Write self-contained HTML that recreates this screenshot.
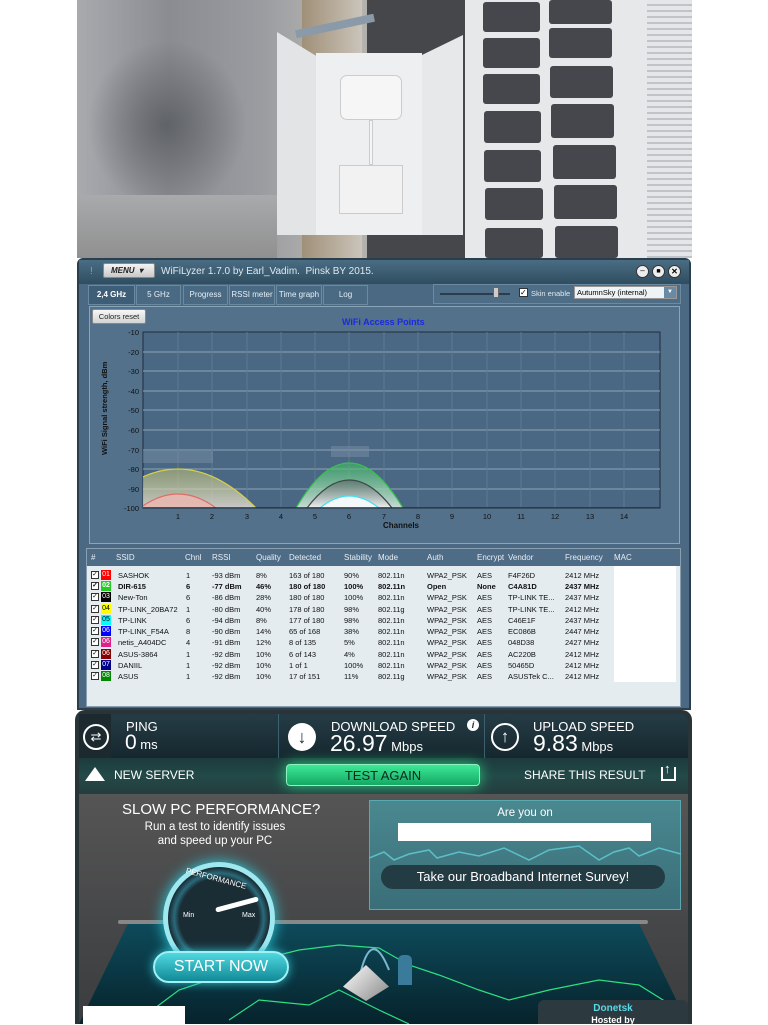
<!DOCTYPE html>
<html><head><meta charset="utf-8"><style>
*{margin:0;padding:0;box-sizing:border-box}
body{width:768px;height:1024px;background:#fff;position:relative;overflow:hidden;font-family:"Liberation Sans",sans-serif}
.a{position:absolute}
.cell{position:absolute;background:#45474c;border-radius:3px}
.tab{position:absolute;top:285px;height:20px;background:#4a6a84;border:1px solid #6a8aa2;color:#e6eef4;font-size:8px;text-align:center;line-height:18px}
.th{position:absolute;top:553px;font-size:8px;color:#e8eef4}
.row{position:absolute;left:88px;width:526px;height:11px;font-size:7.5px;color:#111}
.row span{position:absolute;top:1px;white-space:nowrap}
.chk{position:absolute;left:3px;top:1px;width:8px;height:8px;background:#fff;border:1px solid #333;font-size:7px;line-height:6px;text-align:center}
.sw{position:absolute;left:13px;top:0;width:10px;height:10px;font-size:7px;color:#fff;line-height:10px;text-align:center}
.st{color:#fff}
</style></head><body>

<!-- PHOTO -->
<div class="a" style="left:77px;top:0;width:615px;height:258px;background:linear-gradient(90deg,#a8aaae 0%,#8a8c92 15%,#9a9ca0 30%,#bcbab6 45%,#5a5c60 65%,#d8dadc 80%,#cfd2d4 100%);overflow:hidden">
 <div class="a" style="left:10px;top:40px;width:160px;height:170px;background:radial-gradient(ellipse at center,#606368 0%,rgba(140,142,146,0) 70%)"></div>
 <div class="a" style="left:0;top:195px;width:200px;height:63px;background:linear-gradient(180deg,#a8aaac,#909090)"></div>
 <div class="a" style="left:225px;top:0;width:60px;height:258px;background:linear-gradient(90deg,#a09078,#cac4ba)"></div>
 <div class="a" style="left:290px;top:0;width:100px;height:258px;background:#45474b"></div>
 <div class="a" style="left:388px;top:0;width:182px;height:258px;background:#e6e8ea"></div>
 <div class="a" style="left:570px;top:0;width:45px;height:258px;background:repeating-linear-gradient(180deg,#e4e6e8 0 4px,#c0c4c8 4px 6px)"></div>
</div>
<div class="cell" style="left:483px;top:2px;width:57px;height:30px"></div><div class="cell" style="left:549px;top:0;width:63px;height:24px"></div>
<div class="cell" style="left:483px;top:38px;width:57px;height:30px"></div><div class="cell" style="left:549px;top:28px;width:63px;height:30px"></div>
<div class="cell" style="left:483px;top:74px;width:57px;height:30px"></div><div class="cell" style="left:550px;top:66px;width:63px;height:32px"></div>
<div class="cell" style="left:484px;top:111px;width:57px;height:32px"></div><div class="cell" style="left:551px;top:104px;width:63px;height:34px"></div>
<div class="cell" style="left:484px;top:150px;width:57px;height:32px"></div><div class="cell" style="left:553px;top:145px;width:63px;height:34px"></div>
<div class="cell" style="left:485px;top:188px;width:58px;height:32px"></div><div class="cell" style="left:554px;top:185px;width:63px;height:34px"></div>
<div class="cell" style="left:485px;top:228px;width:58px;height:30px"></div><div class="cell" style="left:555px;top:226px;width:63px;height:32px"></div>
<div class="a" style="left:295px;top:22px;width:80px;height:8px;background:#8a9aa8;transform:rotate(-12deg)"></div>
<div class="a" style="left:277px;top:32px;width:40px;height:203px;background:#e2e4e6;clip-path:polygon(0 0,100% 12%,100% 100%,0 100%)"></div>
<div class="a" style="left:316px;top:53px;width:106px;height:182px;background:#eeeff0"></div>
<div class="a" style="left:422px;top:35px;width:41px;height:200px;background:#e6e8ea;clip-path:polygon(0 10%,100% 0,100% 100%,0 100%)"></div>
<div class="a" style="left:340px;top:75px;width:62px;height:45px;background:#f6f6f6;border:1px solid #ccc;border-radius:7px"></div>
<div class="a" style="left:369px;top:120px;width:4px;height:45px;background:#f6f6f6;border:1px solid #ccc"></div>
<div class="a" style="left:339px;top:165px;width:64px;height:49px;background:#f2f2f2;border:1px solid #ccc"></div>

<!-- WIFILYZER -->
<div class="a" style="left:77px;top:258px;width:614px;height:452px;background:#4b6982;border:2px solid #2b3e4e;border-radius:6px 6px 0 0"></div>
<div class="a" style="left:79px;top:260px;width:610px;height:24px;background:linear-gradient(180deg,#4a6d84,#2f4d60)"></div>
<div class="a" style="left:90px;top:266px;color:#3cc0e0;font-size:10px">!</div>
<div class="a" style="left:103px;top:263px;width:52px;height:15px;background:linear-gradient(#f4f4f4,#c8c8c8);border:1px solid #888;border-radius:2px;font-size:8px;font-weight:bold;font-style:italic;line-height:13px;padding-left:7px;color:#222">MENU&nbsp;&nbsp;▾</div>
<div class="a" style="left:161px;top:266px;color:#e0e8ee;font-size:10px">WiFiLyzer 1.7.0 by Earl_Vadim.&nbsp; Pinsk BY 2015.</div>
<div class="a" style="left:636px;top:265px;width:13px;height:13px;border-radius:50%;background:#eee;border:1px solid #333;font-size:8px;text-align:center;line-height:10px">–</div>
<div class="a" style="left:652px;top:265px;width:13px;height:13px;border-radius:50%;background:#eee;border:1px solid #333;font-size:7px;text-align:center;line-height:11px">■</div>
<div class="a" style="left:668px;top:265px;width:13px;height:13px;border-radius:50%;background:#eee;border:1px solid #333;font-size:8px;font-weight:bold;text-align:center;line-height:11px">✕</div>
<div class="tab" style="left:88px;width:47px;background:#3e5d76;font-weight:bold;color:#fff">2,4 GHz</div>
<div class="tab" style="left:136px;width:45px">5 GHz</div>
<div class="tab" style="left:183px;width:45px">Progress</div>
<div class="tab" style="left:229px;width:46px">RSSI meter</div>
<div class="tab" style="left:276px;width:46px">Time graph</div>
<div class="tab" style="left:323px;width:45px">Log</div>
<div class="a" style="left:433px;top:284px;width:248px;height:20px;background:#4e6e88;border:1px solid #6c8aa0"></div>
<div class="a" style="left:440px;top:293px;width:70px;height:2px;background:#2b3d4c"></div>
<div class="a" style="left:493px;top:287px;width:6px;height:11px;background:#ccc;border:1px solid #666"></div>
<div class="a" style="left:519px;top:288px;width:9px;height:9px;background:#fff;border:1px solid #333;font-size:8px;line-height:7px">✓</div>
<div class="a" style="left:531px;top:289px;font-size:7.5px;color:#e0e8ee">Skin enable</div>
<div class="a" style="left:574px;top:286px;width:103px;height:13px;background:#eef3f6;border:1px solid #999;font-size:7.5px;line-height:11px;padding-left:2px">AutumnSky (internal)</div>
<div class="a" style="left:664px;top:287px;width:12px;height:11px;background:#6a8aa4;color:#fff;font-size:6px;text-align:center;line-height:11px">▼</div>

<div class="a" style="left:89px;top:306px;width:591px;height:238px;background:#53718b;border:1px solid #8aa4b8"></div>
<div class="a" style="left:92px;top:309px;width:54px;height:15px;background:linear-gradient(#f6f6f6,#d4d4d4);border:1px solid #888;border-radius:2px;font-size:7.5px;text-align:center;line-height:13px;color:#222">Colors reset</div>
<div class="a" style="left:342px;top:317px;font-size:9px;font-weight:bold;color:#1a2ae0">WiFi Access Points</div>
<div class="a" style="left:100px;font-size:7.5px;font-weight:bold;color:#111;transform:rotate(-90deg);transform-origin:0 0;top:455px;white-space:nowrap">WiFi Signal strength, dBm</div>
<div class="a" style="left:383px;top:521px;font-size:8px;font-weight:bold;color:#111">Channels</div>
<svg class="a" style="left:0;top:0" width="768" height="1024">
<defs><clipPath id="pc"><rect x="143" y="332" width="517" height="176"/></clipPath>
<linearGradient id="gy" x1="0" y1="0" x2="0" y2="1"><stop offset="0" stop-color="#c8c870" stop-opacity=".5"/><stop offset="1" stop-color="#e8e0d8" stop-opacity=".8"/></linearGradient>
<linearGradient id="gg" x1="0" y1="0" x2="0" y2="1"><stop offset="0" stop-color="#3cb860" stop-opacity=".6"/><stop offset="1" stop-color="#d8e8e0" stop-opacity=".9"/></linearGradient>
<linearGradient id="gk" x1="0" y1="0" x2="0" y2="1"><stop offset="0" stop-color="#506060" stop-opacity=".6"/><stop offset="1" stop-color="#f0f0f0" stop-opacity="1"/></linearGradient></defs>
<rect x="143" y="332" width="517" height="176" fill="#4a6784" stroke="#1f2c38"/>
<g stroke="#8fa4b6" stroke-width="1">
<line x1="143" y1="352" x2="660" y2="352"/><line x1="143" y1="371" x2="660" y2="371"/><line x1="143" y1="391" x2="660" y2="391"/><line x1="143" y1="410" x2="660" y2="410"/><line x1="143" y1="430" x2="660" y2="430"/><line x1="143" y1="450" x2="660" y2="450"/><line x1="143" y1="469" x2="660" y2="469"/><line x1="143" y1="489" x2="660" y2="489"/>
</g>
<g stroke="#5f7b94" stroke-width="1">
<line x1="178" y1="332" x2="178" y2="508"/><line x1="212" y1="332" x2="212" y2="508"/><line x1="247" y1="332" x2="247" y2="508"/><line x1="281" y1="332" x2="281" y2="508"/><line x1="315" y1="332" x2="315" y2="508"/><line x1="349" y1="332" x2="349" y2="508"/><line x1="384" y1="332" x2="384" y2="508"/><line x1="418" y1="332" x2="418" y2="508"/><line x1="452" y1="332" x2="452" y2="508"/><line x1="487" y1="332" x2="487" y2="508"/><line x1="521" y1="332" x2="521" y2="508"/><line x1="555" y1="332" x2="555" y2="508"/><line x1="590" y1="332" x2="590" y2="508"/><line x1="624" y1="332" x2="624" y2="508"/>
</g>
<g clip-path="url(#pc)">
<rect x="143" y="451" width="70" height="12" fill="#7a90a4" opacity=".5"/>
<rect x="331" y="446" width="38" height="11" fill="#7a90a4" opacity=".5"/>
<path d="M100 508 Q178 430 256 508Z" fill="url(#gy)" stroke="#d8d048" stroke-width="1.2"/>
<path d="M140 508 Q178 480 216 508Z" fill="#e8b8b0" stroke="#e06860" stroke-width="1.2" opacity=".9"/>
<path d="M296 508 Q349 418 403 508Z" fill="url(#gg)" stroke="#38c050" stroke-width="1.2"/>
<path d="M307 508 Q349 452 392 508Z" fill="url(#gk)" stroke="#404848" stroke-width="1.2"/>
<path d="M320 508 Q349 484 379 508Z" fill="#f4f8f8" stroke="#40e0f0" stroke-width="1.2"/>
<line x1="143" y1="508" x2="660" y2="508" stroke="#2a2a2a" stroke-width="1.5"/>
</g>
<g font-family="Liberation Sans" font-size="7.5" fill="#111" text-anchor="end">
<text x="139" y="335">-10</text><text x="139" y="355">-20</text><text x="139" y="374">-30</text><text x="139" y="394">-40</text><text x="139" y="413">-50</text><text x="139" y="433">-60</text><text x="139" y="453">-70</text><text x="139" y="472">-80</text><text x="139" y="492">-90</text><text x="139" y="511">-100</text>
</g>
<g font-family="Liberation Sans" font-size="7.5" fill="#111" text-anchor="middle">
<text x="178" y="519">1</text><text x="212" y="519">2</text><text x="247" y="519">3</text><text x="281" y="519">4</text><text x="315" y="519">5</text><text x="349" y="519">6</text><text x="384" y="519">7</text><text x="418" y="519">8</text><text x="452" y="519">9</text><text x="487" y="519">10</text><text x="521" y="519">11</text><text x="555" y="519">12</text><text x="590" y="519">13</text><text x="624" y="519">14</text>
</g>
</svg>

<div class="a" style="left:86px;top:548px;width:595px;height:159px;background:#e4ecf0;border:1px solid #8aa0b0"></div>
<div class="a" style="left:87px;top:549px;width:593px;height:17px;background:#4e6c86"></div>
<div class="th" style="left:91px">#</div><div class="th" style="left:116px">SSID</div><div class="th" style="left:185px">Chnl</div><div class="th" style="left:212px">RSSI</div><div class="th" style="left:256px">Quality</div><div class="th" style="left:289px">Detected</div><div class="th" style="left:344px">Stability</div><div class="th" style="left:378px">Mode</div><div class="th" style="left:427px">Auth</div><div class="th" style="left:477px">Encrypt</div><div class="th" style="left:508px">Vendor</div><div class="th" style="left:565px">Frequency</div><div class="th" style="left:614px">MAC</div>
<div class="a" style="left:614px;top:566px;width:62px;height:116px;background:#fff"></div>

<div class="row" style="top:570px"><div class="chk">✓</div><div class="sw" style="background:#f00">01</div><span style="left:30px">SASHOK</span><span style="left:98px">1</span><span style="left:124px">-93 dBm</span><span style="left:168px">8%</span><span style="left:201px">163 of 180</span><span style="left:256px">90%</span><span style="left:290px">802.11n</span><span style="left:339px">WPA2_PSK</span><span style="left:389px">AES</span><span style="left:420px">F4F26D</span><span style="left:477px">2412 MHz</span></div>
<div class="row" style="top:581px;font-weight:bold"><div class="chk">✓</div><div class="sw" style="background:#2c2">02</div><span style="left:30px">DIR-615</span><span style="left:98px">6</span><span style="left:124px">-77 dBm</span><span style="left:168px">46%</span><span style="left:201px">180 of 180</span><span style="left:256px">100%</span><span style="left:290px">802.11n</span><span style="left:339px">Open</span><span style="left:389px">None</span><span style="left:420px">C4A81D</span><span style="left:477px">2437 MHz</span></div>
<div class="row" style="top:592px"><div class="chk">✓</div><div class="sw" style="background:#000">03</div><span style="left:30px">New-Ton</span><span style="left:98px">6</span><span style="left:124px">-86 dBm</span><span style="left:168px">28%</span><span style="left:201px">180 of 180</span><span style="left:256px">100%</span><span style="left:290px">802.11n</span><span style="left:339px">WPA2_PSK</span><span style="left:389px">AES</span><span style="left:420px">TP-LINK TE...</span><span style="left:477px">2437 MHz</span></div>
<div class="row" style="top:604px"><div class="chk">✓</div><div class="sw" style="background:#ff0;color:#000">04</div><span style="left:30px">TP-LINK_20BA72</span><span style="left:98px">1</span><span style="left:124px">-80 dBm</span><span style="left:168px">40%</span><span style="left:201px">178 of 180</span><span style="left:256px">98%</span><span style="left:290px">802.11g</span><span style="left:339px">WPA2_PSK</span><span style="left:389px">AES</span><span style="left:420px">TP-LINK TE...</span><span style="left:477px">2412 MHz</span></div>
<div class="row" style="top:615px"><div class="chk">✓</div><div class="sw" style="background:#0ff;color:#000">05</div><span style="left:30px">TP-LINK</span><span style="left:98px">6</span><span style="left:124px">-94 dBm</span><span style="left:168px">8%</span><span style="left:201px">177 of 180</span><span style="left:256px">98%</span><span style="left:290px">802.11n</span><span style="left:339px">WPA2_PSK</span><span style="left:389px">AES</span><span style="left:420px">C46E1F</span><span style="left:477px">2437 MHz</span></div>
<div class="row" style="top:626px"><div class="chk">✓</div><div class="sw" style="background:#00f">06</div><span style="left:30px">TP-LINK_F54A</span><span style="left:98px">8</span><span style="left:124px">-90 dBm</span><span style="left:168px">14%</span><span style="left:201px">65 of 168</span><span style="left:256px">38%</span><span style="left:290px">802.11n</span><span style="left:339px">WPA2_PSK</span><span style="left:389px">AES</span><span style="left:420px">EC086B</span><span style="left:477px">2447 MHz</span></div>
<div class="row" style="top:637px"><div class="chk">✓</div><div class="sw" style="background:#e0208a">06</div><span style="left:30px">netis_A404DC</span><span style="left:98px">4</span><span style="left:124px">-91 dBm</span><span style="left:168px">12%</span><span style="left:201px">8 of 135</span><span style="left:256px">5%</span><span style="left:290px">802.11n</span><span style="left:339px">WPA2_PSK</span><span style="left:389px">AES</span><span style="left:420px">048D38</span><span style="left:477px">2427 MHz</span></div>
<div class="row" style="top:649px"><div class="chk">✓</div><div class="sw" style="background:#800">06</div><span style="left:30px">ASUS-3864</span><span style="left:98px">1</span><span style="left:124px">-92 dBm</span><span style="left:168px">10%</span><span style="left:201px">6 of 143</span><span style="left:256px">4%</span><span style="left:290px">802.11n</span><span style="left:339px">WPA2_PSK</span><span style="left:389px">AES</span><span style="left:420px">AC220B</span><span style="left:477px">2412 MHz</span></div>
<div class="row" style="top:660px"><div class="chk">✓</div><div class="sw" style="background:#008">07</div><span style="left:30px">DANIIL</span><span style="left:98px">1</span><span style="left:124px">-92 dBm</span><span style="left:168px">10%</span><span style="left:201px">1 of 1</span><span style="left:256px">100%</span><span style="left:290px">802.11n</span><span style="left:339px">WPA2_PSK</span><span style="left:389px">AES</span><span style="left:420px">50465D</span><span style="left:477px">2412 MHz</span></div>
<div class="row" style="top:671px"><div class="chk">✓</div><div class="sw" style="background:#080">08</div><span style="left:30px">ASUS</span><span style="left:98px">1</span><span style="left:124px">-92 dBm</span><span style="left:168px">10%</span><span style="left:201px">17 of 151</span><span style="left:256px">11%</span><span style="left:290px">802.11g</span><span style="left:339px">WPA2_PSK</span><span style="left:389px">AES</span><span style="left:420px">ASUSTek C...</span><span style="left:477px">2412 MHz</span></div>

<!-- SPEEDTEST -->
<div class="a" style="left:75px;top:710px;width:617px;height:314px;background:#2a3438;border-radius:10px 10px 0 0"></div>
<div class="a" style="left:79px;top:714px;width:609px;height:44px;background:linear-gradient(#253c46,#16272e);border-radius:8px 8px 0 0"></div>
<div class="a" style="left:79px;top:714px;width:32px;height:44px;background:#1c2a30"></div>
<div class="a" style="left:278px;top:714px;width:1px;height:44px;background:#3c6070"></div>
<div class="a" style="left:484px;top:714px;width:1px;height:44px;background:#3c6070"></div>
<div class="a" style="left:83px;top:724px;width:26px;height:26px;border:2px solid #fff;border-radius:50%;color:#fff;font-size:13px;text-align:center;line-height:22px">⇄</div>
<div class="a st" style="left:126px;top:719px;font-size:13px">PING</div>
<div class="a st" style="left:125px;top:731px;font-size:21px">0<span style="font-size:13px"> ms</span></div>
<div class="a" style="left:288px;top:723px;width:28px;height:28px;background:#fff;border-radius:50%;color:#1a2a30;font-size:18px;font-weight:bold;text-align:center;line-height:28px">↓</div>
<div class="a st" style="left:331px;top:719px;font-size:13px">DOWNLOAD SPEED</div>
<div class="a" style="left:467px;top:719px;width:12px;height:12px;background:#fff;border-radius:50%;font-size:9px;font-weight:bold;font-style:italic;text-align:center;line-height:12px;color:#1a2a30">i</div>
<div class="a st" style="left:330px;top:730px;font-size:23px">26.97<span style="font-size:13px"> Mbps</span></div>
<div class="a" style="left:491px;top:723px;width:28px;height:28px;border:2px solid #fff;border-radius:50%;color:#fff;font-size:17px;font-weight:bold;text-align:center;line-height:24px">↑</div>
<div class="a st" style="left:533px;top:719px;font-size:13px">UPLOAD SPEED</div>
<div class="a st" style="left:533px;top:730px;font-size:23px">9.83<span style="font-size:13px"> Mbps</span></div>

<div class="a" style="left:79px;top:758px;width:609px;height:36px;background:linear-gradient(#1d3a3c,#224a48 50%,#263c3e)"></div>
<div class="a" style="left:85px;top:767px;width:0;height:0;border-left:10px solid transparent;border-right:10px solid transparent;border-bottom:14px solid #fff"></div>
<div class="a st" style="left:114px;top:768px;font-size:12px">NEW SERVER</div>
<div class="a" style="left:286px;top:764px;width:194px;height:22px;background:linear-gradient(#3ee898,#14a864);border:1px solid #8ff0c0;border-radius:4px;box-shadow:0 0 14px #2ad080;color:#0c2a1c;font-size:13px;text-align:center;line-height:21px">TEST AGAIN</div>
<div class="a st" style="left:524px;top:768px;font-size:12px">SHARE THIS RESULT</div>
<div class="a" style="left:661px;top:767px;width:15px;height:14px;border:2px solid #fff;border-top:none"></div>
<div class="a st" style="left:664px;top:761px;font-size:13px;font-weight:bold">↑</div>

<div class="a" style="left:79px;top:794px;width:609px;height:230px;background:linear-gradient(#555,#3a3c3e)"></div>
<div class="a st" style="left:122px;top:801px;font-size:15px">SLOW PC PERFORMANCE?</div>
<div class="a st" style="left:120px;top:820px;width:190px;text-align:center;font-size:11.5px;line-height:14px">Run a test to identify issues<br>and speed up your PC</div>
<div class="a" style="left:369px;top:800px;width:312px;height:110px;background:linear-gradient(#4a8890,#3a6e78);border:1px solid #5aa8b0"></div>
<div class="a st" style="left:369px;top:807px;width:312px;text-align:center;font-size:11.5px">Are you on</div>
<div class="a" style="left:398px;top:823px;width:253px;height:18px;background:#fff"></div>
<svg class="a" style="left:369px;top:840px" width="312" height="25"><polyline points="0,18 15,12 25,20 40,14 60,10 68,18 90,12 110,16 135,8 160,20 180,10 210,6 230,20 245,12 260,8 270,16 290,8 312,14" fill="none" stroke="#5cc0c8" stroke-width="1.5"/></svg>
<div class="a" style="left:381px;top:865px;width:284px;height:24px;background:#233c44;border-radius:12px;color:#fff;font-size:13px;text-align:center;line-height:24px">Take our Broadband Internet Survey!</div>

<div class="a" style="left:79px;top:924px;width:609px;height:100px;background:linear-gradient(#0e4a5a,#06232c);clip-path:polygon(8% 0,92% 0,100% 100%,0 100%)"></div>
<div class="a" style="left:118px;top:920px;width:530px;height:4px;background:#888;border-radius:2px"></div>
<svg class="a" style="left:79px;top:920px" width="609" height="104"><path d="M60 100 L100 70 130 60 180 40 220 30 260 25 300 28 330 45 360 55 400 70 430 80 470 70 520 60 560 65 600 90" fill="none" stroke="#2ee080" stroke-width="1.2"/><path d="M150 100 L180 80 230 85 260 70 300 90 330 104" fill="none" stroke="#2ee080" stroke-width="1.2"/><path d="M278 70 Q290 0 310 50" fill="none" stroke="#7ab8d0" stroke-width="2"/></svg>
<div class="a" style="left:343px;top:965px;width:46px;height:36px;background:linear-gradient(135deg,#fff,#888);clip-path:polygon(50% 0,100% 60%,50% 100%,0 60%)"></div>
<div class="a" style="left:398px;top:955px;width:14px;height:30px;background:#3a7a9a;border-radius:5px 5px 0 0"></div>

<div class="a" style="left:163px;top:862px;width:112px;height:112px;border-radius:50%;background:radial-gradient(circle,#1a2c34 55%,#2a6a7a 62%,#1a2c34 70%);border:5px solid #9ee8f0;border-bottom-color:transparent;box-shadow:0 0 14px #2ad0e0"></div>
<div class="a" style="left:185px;top:874px;color:#fff;font-size:8px;transform:rotate(15deg)">PERFORMANCE</div>
<div class="a" style="left:215px;top:902px;width:44px;height:5px;background:#fff;border-radius:3px;transform:rotate(-15deg)"></div>
<div class="a st" style="left:183px;top:912px;font-size:7px">Min</div>
<div class="a st" style="left:242px;top:912px;font-size:7px">Max</div>
<div class="a" style="left:153px;top:951px;width:136px;height:32px;background:linear-gradient(#4fd8e0,#108a96);border:2px solid #a0f0f4;border-radius:16px;box-shadow:0 0 10px #30c0d0;color:#fff;font-size:16px;text-align:center;line-height:28px">START NOW</div>

<div class="a" style="left:83px;top:1006px;width:102px;height:18px;background:#fff"></div>
<div class="a" style="left:538px;top:1000px;width:150px;height:24px;background:#2c3a40;border-radius:6px 6px 0 0"></div>
<div class="a" style="left:538px;top:1003px;width:150px;text-align:center;color:#5ad8e8;font-size:10px;font-weight:bold">Donetsk</div>
<div class="a st" style="left:538px;top:1015px;width:150px;text-align:center;font-size:9px;font-weight:bold">Hosted by</div>
</body></html>
